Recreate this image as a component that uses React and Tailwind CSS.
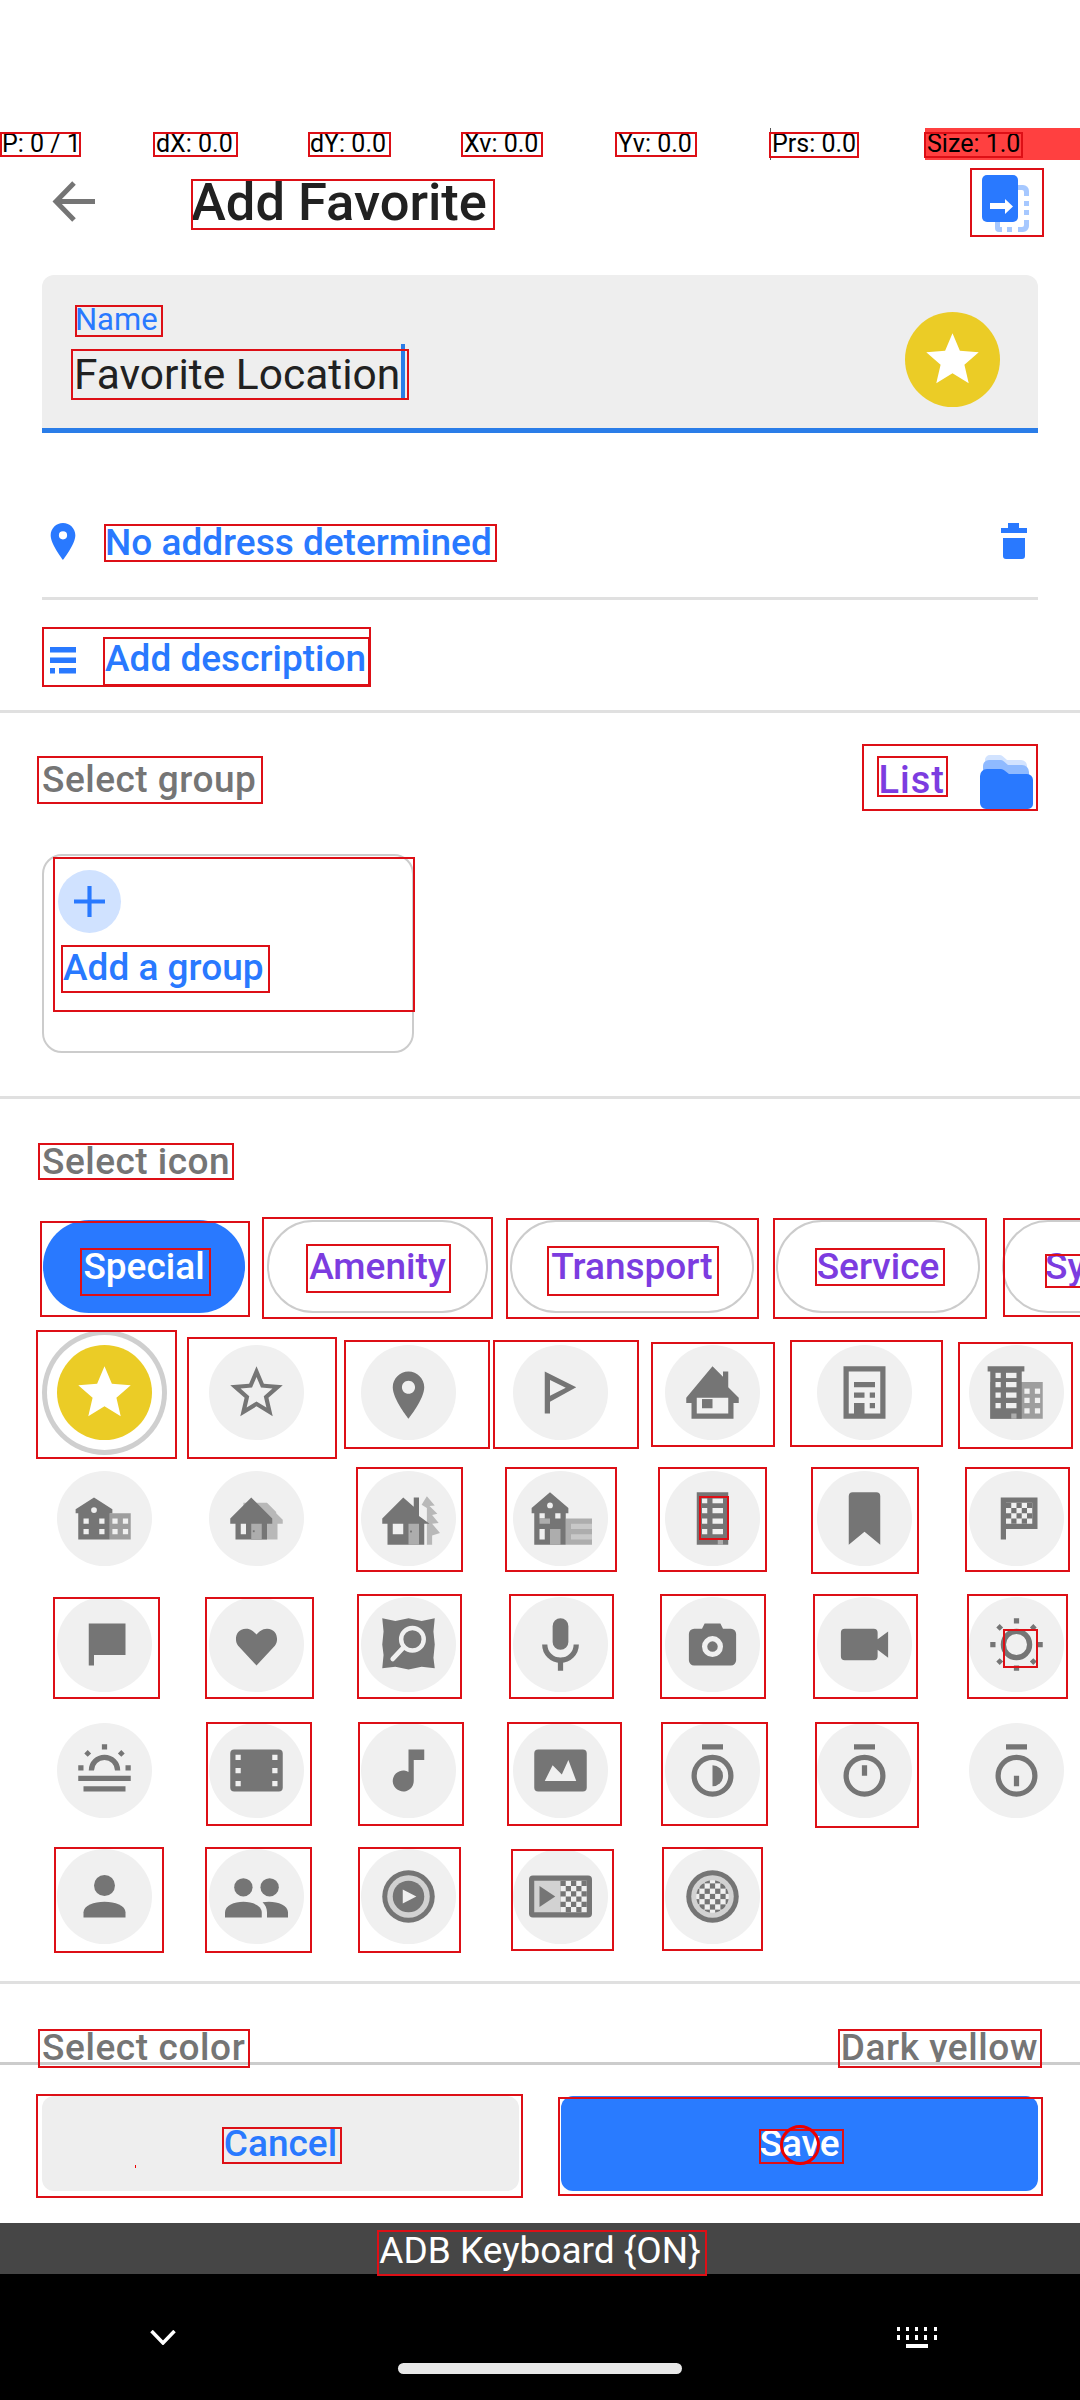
import React from "react";

const DARK = "#757575";
const LIGHT = "#adadad";
const HOLE = "#f0f0f0";

// dark/light squares for the checker icons
function Checker({ x, y, cols, rows, size = 2 }) {
  const cells = [];
  for (let r = 0; r < rows; r++) {
    for (let c = 0; c < cols; c++) {
      if ((r + c) % 2 === 0) {
        cells.push(<rect key={`${r}-${c}`} x={x + c * size} y={y + r * size} width={size} height={size} fill={DARK} />);
      }
    }
  }
  return <>{cells}</>;
}

const Holes = ({ items, fill = HOLE }) => (
  <>
    {items.map(([x, y, w, h], i) => (
      <rect key={i} x={x} y={y} width={w} height={h} fill={fill} />
    ))}
  </>
);

const SunDots = () => (
  <path fill={DARK} d="M11 2h2v2h-2zM5.600 4.200l1.300 1.300-1.300 1.300-1.300-1.300zM18.400 4.200l1.300 1.300-1.300 1.300-1.300-1.300z" />
);

const icons = [
  <path key="s" fill="#fff" d="M12 17.270L18.180 21l-1.640-7.030L22 9.240l-7.190-.61L12 2 9.190 8.630 2 9.240l5.460 4.730L5.820 21z" />,
  <path key="so" fill={DARK} d="M22 9.240l-7.190-.62L12 2 9.190 8.630 2 9.240l5.460 4.730L5.820 21 12 17.270 18.180 21l-1.630-7.030L22 9.240zM12 15.400l-3.760 2.270 1-4.280-3.320-2.880 4.380-.38L12 6.100l1.710 4.040 4.380.38-3.320 2.880 1 4.280L12 15.400z" />,
  <path key="pin" fill={DARK} fillRule="evenodd" d="M12 4C8.700 4 6 6.700 6 10c0 4.500 6 12 6 12s6-7.500 6-12c0-3.300-2.700-6-6-6zm0 8.500c-1.400 0-2.500-1.100-2.500-2.500s1.100-2.500 2.500-2.500 2.500 1.100 2.500 2.500-1.100 2.500-2.500 2.500z" />,
  <path key="pen" fill={DARK} fillRule="evenodd" d="M6 4l12 6-10 5.500V20H6zM8 7.200v6l6-3z" />,
  <g key="house">
    <path fill={DARK} d="M12 2l4 4V4h2v6l4 4v2h-2v6H4v-6H2v-2z" />
    <Holes items={[[6, 14, 12, 6]]} />
    <rect x="8" y="14.500" width="4" height="3.500" fill={DARK} />
  </g>,
  <g key="office">
    <path fill={DARK} fillRule="evenodd" d="M4 2h16v20H4zM6 4v16h2v-4h4v4h6V4z" />
    <path fill={DARK} d="M8 8h8v2H8zM8 12h4v2H8zM14 12h2v2h-2zM14 16h2v2h-2z" />
  </g>,
  <g key="city">
    <rect x="2" y="8" width="20" height="14" fill="#9e9e9e" />
    <path fill={DARK} d="M1 2h14v2h-1v18H2V4H1z" />
    <Holes items={[[4, 4.500, 2, 2], [8, 4.500, 4, 2], [4, 8, 2, 2], [8, 8, 4, 2], [4, 12, 2, 2], [8, 12, 4, 2], [4, 16, 2, 2], [8, 16, 4, 2], [15, 10.500, 2, 2], [19, 10.500, 2, 2], [15, 14, 2, 2], [19, 14, 2, 2], [15, 18, 2, 2], [19, 18, 2, 2]]} />
    <rect x="10" y="20" width="2" height="2" fill={LIGHT} />
  </g>,
  <g key="school">
    <rect x="14" y="10" width="8" height="10" fill="#9e9e9e" />
    <path fill={DARK} d="M8 4l7 4.500V10h-1v10H2V10H1V8.500z" />
    <circle cx="8" cy="8.800" r="1.100" fill={HOLE} />
    <Holes items={[[4, 12, 2, 2], [10, 12, 2, 2], [4, 16, 2, 2], [10, 16, 2, 2], [15, 12, 2, 2], [19, 12, 2, 2], [15, 16, 2, 2], [19, 16, 2, 2]]} />
  </g>,
  <g key="houses">
    <path fill="#b8b8b8" d="M4 8h3V6h6l3 0 3.500 3.500V10l2.500 2.500V14h-2v6H10V8z" />
    <path fill={DARK} d="M10 4l8 8v2h-2v6H4v-6H2v-2z" />
    <Holes items={[[6, 14, 2, 4]]} />
    <rect x="10" y="14" width="4" height="6" fill={LIGHT} />
    <rect x="10.600" y="16.500" width="0.700" height="0.700" fill={DARK} />
  </g>,
  <g key="cabin">
    <path fill="#b8b8b8" d="M19 3.500l3 3.500-2 .2 3 3-2 .5 2.500 3-2.500 .3 3 3.500-3 1V22h-2V8l-2-1.200z" />
    <path fill={DARK} d="M10 4l4 3.500V4h2v7l4 3v-2 2h-2v8H4v-8H2v-2z" />
    <Holes items={[[6, 14, 4, 4]]} />
    <rect x="12" y="14" width="4" height="8" fill={LIGHT} />
    <rect x="12.600" y="16.600" width="0.700" height="0.700" fill={DARK} />
  </g>,
  <g key="parking">
    <rect x="14" y="12" width="10" height="10" fill={LIGHT} />
    <Holes items={[[16, 14, 8, 2], [16, 18, 8, 2]]} fill="#c8c8c8" />
    <path fill={DARK} d="M8 2l7 6v2h-1v12H2V10H1V8z" />
    <circle cx="8" cy="7" r="1.100" fill={HOLE} />
    <Holes items={[[4, 10, 2, 2], [10, 10, 2, 2], [4, 16, 2, 4]]} />
    <rect x="4" y="12" width="4" height="2" fill={LIGHT} />
    <rect x="8" y="16" width="4" height="6" fill={LIGHT} />
  </g>,
  <g key="tower">
    <rect x="6" y="2" width="12" height="20" fill={DARK} />
    <Holes items={[[8, 4.400, 2, 1.800], [12, 4.400, 4, 1.800], [8, 8, 2, 2], [12, 8, 4, 2], [8, 12, 2, 2], [12, 12, 4, 2], [8, 16, 2, 2], [12, 16, 4, 2]]} />
    <rect x="14" y="20" width="2" height="2" fill={LIGHT} />
  </g>,
  <path key="mark" fill={DARK} d="M7.500 2h9A1.500 1.500 0 0 1 18 3.500V22l-6-5-6 5V3.500A1.500 1.500 0 0 1 7.500 2z" />,
  <g key="chk">
    <path fill={DARK} d="M6 4h14v12H8v4H6z" />
    <rect x="8" y="6" width="10" height="8" fill={HOLE} />
    <Checker x={8} y={6} cols={5} rows={4} />
  </g>,
  <path key="flag" fill={DARK} d="M6 4h14v12H8v4H6z" />,
  <path key="heart" fill={DARK} d="M12 20l-7-7.500C3.400 10.500 4 6 8 6c2 0 3 1.200 4 2.200C13 7.200 14 6 16 6c4 0 4.600 4.500 3 6.500z" />,
  <g key="map">
    <path fill={DARK} d="M2 2l5 1 5-1 5 1 5-1-.5 5 .5 5-.5 5 .5 4-5-.5-5 1-5-1-5 .5.500-5L2 12l.5-5z" />
    <circle cx="13.500" cy="10" r="4.300" fill="none" stroke={HOLE} strokeWidth="1.700" />
    <path d="M10.200 13L6 17.500" stroke={HOLE} strokeWidth="1.800" strokeLinecap="round" />
  </g>,
  <g key="mic">
    <path fill={DARK} d="M12 2a3 3 0 0 0-3 3v6a3 3 0 0 0 6 0V5a3 3 0 0 0-3-3zM11 17h2v5h-2z" />
    <path d="M6 12a6 6 0 0 0 12 0" fill="none" stroke={DARK} strokeWidth="2" />
  </g>,
  <path key="cam" fill={DARK} fillRule="evenodd" d="M5 6h3l1-2h6l1 2h3a2 2 0 0 1 2 2v10a2 2 0 0 1-2 2H5a2 2 0 0 1-2-2V8a2 2 0 0 1 2-2zM12 8.800a4 4 0 1 0 0 8 4 4 0 0 0 0-8zM12 10.800a2 2 0 1 1 0 4 2 2 0 0 1 0-4z" />,
  <path key="vid" fill={DARK} d="M4.500 6h11A1.500 1.500 0 0 1 17 7.500V10l4-3v10l-4-3v2.500a1.500 1.500 0 0 1-1.500 1.500h-11A1.500 1.500 0 0 1 3 16.500v-9A1.500 1.500 0 0 1 4.500 6z" />,
  <g key="sun">
    <circle cx="12" cy="12" r="5" fill="none" stroke={DARK} strokeWidth="2" />
    <SunDots />
    <path fill={DARK} d="M11 20h2v2h-2zM2 11h2v2H2zM20 11h2v2h-2zM5.600 17.200l1.300 1.300-1.300 1.300-1.300-1.300zM18.400 17.200l1.300 1.300-1.300 1.300-1.300-1.300z" />
  </g>,
  <g key="rise">
    <SunDots />
    <path d="M7 12a5 5 0 0 1 10 0" fill="none" stroke={DARK} strokeWidth="2" />
    <path fill={DARK} d="M2 10h2v2H2zM20 10h2v2h-2zM2 14h20v2H2zM4 18h16v2H4z" />
  </g>,
  <path key="film" fill={DARK} fillRule="evenodd" d="M3.500 4h17A1.500 1.500 0 0 1 22 5.500v13a1.500 1.500 0 0 1-1.500 1.500h-17A1.500 1.500 0 0 1 2 18.500v-13A1.500 1.500 0 0 1 3.500 4zM4 6v2h2V6zM18 6v2h2V6zM4 11v2h2v-2zM18 11v2h2v-2zM4 16v2h2v-2zM18 16v2h2v-2z" />,
  <path key="note" fill={DARK} d="M12 4h6v4h-4v8a4 4 0 1 1-2-3.460z" />,
  <path key="img" fill={DARK} fillRule="evenodd" d="M3.500 4h17A1.500 1.500 0 0 1 22 5.500v13a1.500 1.500 0 0 1-1.500 1.500h-17A1.500 1.500 0 0 1 2 18.500v-13A1.500 1.500 0 0 1 3.500 4zM6 16h12l-3-8-2.500 5.500L9 10z" />,
  <g key="t1">
    <rect x="8" y="2" width="8" height="2" fill={DARK} />
    <circle cx="12" cy="14" r="7" fill="none" stroke={DARK} strokeWidth="2" />
    <path fill={DARK} d="M12 10a4 4 0 0 1 0 8z" />
  </g>,
  <g key="t2">
    <rect x="8" y="2" width="8" height="2" fill={DARK} />
    <circle cx="12" cy="14" r="7" fill="none" stroke={DARK} strokeWidth="2" />
    <rect x="11" y="10" width="2" height="4" fill={DARK} />
  </g>,
  <g key="t3">
    <rect x="8" y="2" width="8" height="2" fill={DARK} />
    <circle cx="12" cy="14" r="7" fill="none" stroke={DARK} strokeWidth="2" />
    <rect x="11" y="14" width="2" height="4" fill={DARK} />
  </g>,
  <g key="person" fill={DARK}>
    <circle cx="12" cy="7.800" r="4" />
    <path d="M4 20v-2c0-2.500 4-4 8-4s8 1.500 8 4v2z" />
  </g>,
  <g key="people" fill={DARK}>
    <circle cx="7" cy="8.500" r="3.500" />
    <circle cx="17" cy="8.500" r="3.500" />
    <path d="M0 20v-2c0-2.500 3.500-4 7-4s7 1.500 7 4v2z" />
    <path d="M14.300 14.200C18.500 13.400 24 14.800 24 18v2h-8v-2c0-1.500-.6-2.700-1.700-3.800z" />
  </g>,
  <g key="play">
    <circle cx="12" cy="12" r="10" fill={DARK} />
    <circle cx="12" cy="12" r="8.100" fill="#d2d2d2" />
    <circle cx="12" cy="12" r="6" fill={DARK} />
    <path fill="#f0f0f0" d="M9.800 9.300l5.200 2.700-5.200 2.700z" />
  </g>,
  <g key="vchk">
    <rect x="0" y="4" width="24" height="16" rx="1.500" fill={DARK} />
    <rect x="2" y="6" width="10" height="12" fill="#d2d2d2" />
    <rect x="12" y="6" width="10" height="12" fill="#f0f0f0" />
    <path fill={DARK} d="M4 8l6 4-6 4z" />
    <Checker x={12} y={6} cols={5} rows={6} />
  </g>,
  <g key="cchk">
    <circle cx="12" cy="12" r="10" fill={DARK} />
    <circle cx="12" cy="12" r="8.100" fill="#d2d2d2" />
    <clipPath id="disc">
      <circle cx="12" cy="12" r="6.200" />
    </clipPath>
    <g clipPath="url(#disc)">
      <rect x="5" y="5" width="14" height="14" fill="#f0f0f0" />
      <Checker x={5} y={5} cols={7} rows={7} />
    </g>
  </g>,
];

const chips = [
  { label: "Amenity", cls: "w-[221px]" },
  { label: "Transport", cls: "w-[244px]" },
  { label: "Service", cls: "w-[204px]" },
];

// red debug frames from the layout inspector overlay
const frames = [
  "left-[0px] top-[132px] w-[81px] h-[25px]",
  "left-[153px] top-[132px] w-[85px] h-[25px]",
  "left-[308px] top-[132px] w-[83px] h-[25px]",
  "left-[461px] top-[132px] w-[82px] h-[25px]",
  "left-[615px] top-[132px] w-[82px] h-[25px]",
  "left-[769px] top-[132px] w-[90px] h-[26px]",
  "left-[924px] top-[132px] w-[99px] h-[26px]",
  "left-[191px] top-[179px] w-[304px] h-[51px]",
  "left-[970px] top-[168px] w-[74px] h-[69px]",
  "left-[75px] top-[305px] w-[88px] h-[32px]",
  "left-[71px] top-[349px] w-[338px] h-[51px]",
  "left-[104px] top-[524px] w-[393px] h-[38px]",
  "left-[42px] top-[627px] w-[329px] h-[60px]",
  "left-[103px] top-[637px] w-[267px] h-[49px]",
  "left-[37px] top-[756px] w-[226px] h-[48px]",
  "left-[862px] top-[744px] w-[176px] h-[67px]",
  "left-[877px] top-[756px] w-[71px] h-[41px]",
  "left-[53px] top-[857px] w-[362px] h-[155px]",
  "left-[61px] top-[945px] w-[209px] h-[48px]",
  "left-[38px] top-[1143px] w-[196px] h-[37px]",
  "left-[40px] top-[1221px] w-[210px] h-[96px]",
  "left-[80px] top-[1248px] w-[131px] h-[48px]",
  "left-[262px] top-[1217px] w-[231px] h-[102px]",
  "left-[306px] top-[1244px] w-[145px] h-[49px]",
  "left-[506px] top-[1218px] w-[253px] h-[101px]",
  "left-[547px] top-[1246px] w-[172px] h-[50px]",
  "left-[773px] top-[1218px] w-[214px] h-[101px]",
  "left-[815px] top-[1248px] w-[130px] h-[38px]",
  "left-[1003px] top-[1218px] w-[90px] h-[99px]",
  "left-[1045px] top-[1254px] w-[40px] h-[34px]",
  "left-[36px] top-[1330px] w-[141px] h-[129px]",
  "left-[187px] top-[1337px] w-[150px] h-[122px]",
  "left-[344px] top-[1340px] w-[146px] h-[109px]",
  "left-[493px] top-[1340px] w-[146px] h-[109px]",
  "left-[651px] top-[1342px] w-[124px] h-[105px]",
  "left-[790px] top-[1340px] w-[153px] h-[107px]",
  "left-[958px] top-[1342px] w-[115px] h-[107px]",
  "left-[356px] top-[1467px] w-[107px] h-[105px]",
  "left-[505px] top-[1467px] w-[112px] h-[105px]",
  "left-[658px] top-[1467px] w-[109px] h-[105px]",
  "left-[699px] top-[1496px] w-[30px] h-[44px]",
  "left-[811px] top-[1467px] w-[108px] h-[107px]",
  "left-[965px] top-[1467px] w-[105px] h-[105px]",
  "left-[53px] top-[1597px] w-[107px] h-[102px]",
  "left-[205px] top-[1597px] w-[109px] h-[102px]",
  "left-[357px] top-[1594px] w-[105px] h-[105px]",
  "left-[509px] top-[1594px] w-[105px] h-[105px]",
  "left-[660px] top-[1594px] w-[106px] h-[105px]",
  "left-[813px] top-[1594px] w-[105px] h-[105px]",
  "left-[967px] top-[1594px] w-[101px] h-[105px]",
  "left-[1003px] top-[1629px] w-[35px] h-[39px]",
  "left-[206px] top-[1722px] w-[106px] h-[104px]",
  "left-[358px] top-[1722px] w-[106px] h-[104px]",
  "left-[507px] top-[1722px] w-[115px] h-[104px]",
  "left-[661px] top-[1722px] w-[107px] h-[104px]",
  "left-[815px] top-[1722px] w-[104px] h-[106px]",
  "left-[54px] top-[1847px] w-[110px] h-[106px]",
  "left-[205px] top-[1847px] w-[107px] h-[106px]",
  "left-[358px] top-[1847px] w-[103px] h-[106px]",
  "left-[511px] top-[1849px] w-[103px] h-[102px]",
  "left-[662px] top-[1847px] w-[101px] h-[104px]",
  "left-[38px] top-[2029px] w-[212px] h-[39px]",
  "left-[838px] top-[2029px] w-[204px] h-[39px]",
  "left-[36px] top-[2094px] w-[487px] h-[104px]",
  "left-[222px] top-[2127px] w-[120px] h-[37px]",
  "left-[558px] top-[2097px] w-[485px] h-[99px]",
  "left-[759px] top-[2129px] w-[85px] h-[35px]",
  "left-[377px] top-[2230px] w-[330px] h-[46px]",
];

function IconCircle({ children, selected }) {
  return (
    <div
      className={
        selected
          ? "w-[95px] h-[95px] rounded-full bg-[#ebcc26] flex items-center justify-center shadow-[0_0_0_10px_#fff,0_0_0_15px_#cfcfcf]"
          : "w-[95px] h-[95px] rounded-full bg-[#f0f0f0] flex items-center justify-center"
      }
    >
      <svg viewBox="0 0 24 24" className="w-[63px] h-[63px]">
        {children}
      </svg>
    </div>
  );
}

export default function App() {
  return (
    <div className="relative w-[1080px] h-[2400px] overflow-hidden bg-white flex flex-col font-[Roboto,sans-serif]">
      <div className="h-[128px] shrink-0"></div>

      {/* pointer location bar */}
      <div className="h-[32px] shrink-0 flex text-[25px] leading-[32px] text-black">
        <div className="w-[154px] pl-[2px]">P: 0 / 1</div>
        <div className="w-[154px] pl-[2px]">dX: 0.0</div>
        <div className="w-[154px] pl-[2px]">dY: 0.0</div>
        <div className="w-[154px] pl-[2px]">Xv: 0.0</div>
        <div className="w-[154px] pl-[2px]">Yv: 0.0</div>
        <div className="w-[155px] pl-[1px] border-l border-[#555]">Prs: 0.0</div>
        <div className="flex-1 pl-[2px] bg-[#ff4040]">Size: 1.0</div>
      </div>

      {/* app bar */}
      <div className="h-[88px] shrink-0 flex items-center pl-[52px] pr-[50px]">
        <svg viewBox="0 0 43 41" className="w-[43px] h-[41px] mt-[-6px]" fill="none" stroke="#757575" strokeWidth="5">
          <path d="M43 20.500H6M22 2L4 20.500 22 39" />
        </svg>
        <div className="ml-[96px] text-[52.5px] leading-[51px] font-medium text-[#212121] mt-[-4px]">Add Favorite</div>
        <svg viewBox="0 0 48 58" className="ml-auto w-[48px] h-[58px] mt-[-1px]">
          <g fill="#a6c8ff">
            <path d="M36 10h5a6 6 0 0 1 6 6v5h-5v-4a2 2 0 0 0-2-2h-4z" />
            <rect x="42" y="26" width="5" height="5" />
            <rect x="42" y="35" width="5" height="5" />
            <path d="M42 45h5v6a6 6 0 0 1-6 6h-5v-5h4a2 2 0 0 0 2-2z" />
            <rect x="25" y="52" width="5" height="5" />
            <path d="M13 47h5v5h2v5h-3a4 4 0 0 1-4-4z" />
          </g>
          <rect width="36" height="47" rx="5" fill="#2979ff" />
          <path fill="#fff" d="M8 28h15v-4l8 7.500-8 7.500v-5H8z" />
        </svg>
      </div>

      {/* name field */}
      <div className="mt-[27px] mx-[42px] h-[158px] shrink-0 bg-[#eeeeee] rounded-t-[12px] border-b-[5px] border-[#2a7de8] flex">
        <div className="flex-1 pl-[32px] pt-[29px]">
          <div className="ml-[1px] text-[31px] leading-[32px] text-[#2979ff]">Name</div>
          <div className="mt-[13px] flex h-[51px] text-[42.5px] leading-[51px] text-[#212121]">
            Favorite Location
            <span className="ml-[1px] -mt-[5px] w-[4px] h-[56px] bg-[#2a7de8]"></span>
          </div>
        </div>
        <div className="mt-[37px] mr-[38px] w-[95px] h-[95px] rounded-full bg-[#ebcc26] flex items-center justify-center">
          <svg viewBox="0 0 24 24" className="w-[63px] h-[63px]">
            {icons[0]}
          </svg>
        </div>
      </div>

      {/* address */}
      <div className="mt-[91px] mx-[42px] shrink-0 flex items-center h-[76px] pb-[39px] border-b-[3px] border-[#e0e0e0]">
        <svg viewBox="0 0 12 18" className="ml-[8px] w-[26px] h-[37px]">
          <path fill="#2979ff" fillRule="evenodd" d="M6 0C2.700 0 0 2.700 0 6c0 4.500 6 12 6 12s6-7.500 6-12c0-3.300-2.700-6-6-6zm0 8a2 2 0 1 1 0-4 2 2 0 0 1 0 4z" />
        </svg>
        <div className="ml-[29px] mt-[3px] text-[37px] leading-[38px] font-medium text-[#2979ff]">No address determined</div>
        <svg viewBox="0 0 28 38" className="ml-auto mr-[10px] w-[28px] h-[38px]" fill="#2979ff">
          <path d="M8 1h11v5h8v5H1V6h7zM3 16h22v18a3 3 0 0 1-3 3H6a3 3 0 0 1-3-3z" />
        </svg>
      </div>

      {/* description */}
      <div className="mt-[37px] ml-[50px] shrink-0 flex items-center h-[48px]">
        <svg viewBox="0 0 26 27" className="w-[26px] h-[27px] -mt-[2px]" fill="#2979ff">
          <path d="M0 0h26v5.500H0zM0 10.500h26V16H0zM0 21h5v5.500H0zM9 21h17v5.500H9z" />
        </svg>
        <div className="ml-[29px] -mt-[4px] text-[37px] leading-[48px] font-medium text-[#2979ff]">Add description</div>
      </div>
      <div className="mt-[25px] h-[3px] shrink-0 bg-[#e0e0e0]"></div>

      {/* group */}
      <div className="mt-[36px] px-[42px] shrink-0 flex items-start h-[60px]">
        <div className="mt-[10px] text-[37px] leading-[42px] tracking-[0.5px] font-medium text-[#757575]">Select group</div>
        <div className="ml-auto mt-[10px] text-[38px] leading-[42px] tracking-[1px] font-medium text-[#7c3ce0]">List</div>
        <svg viewBox="0 0 53 56" className="mt-[5px] ml-[35px] mr-[5px] w-[53px] h-[56px]">
          <path fill="#d2e3ff" d="M5 24V6a5 5 0 0 1 5-5h10a4 4 0 0 1 3 1.500l4 3.500h14a6 6 0 0 1 6 6v12z" />
          <path fill="#8fbaff" d="M3 28V12a6 6 0 0 1 6-6h12a4 4 0 0 1 3 1.500l4 3.500h14a7 7 0 0 1 7 7v10z" />
          <path fill="#2979ff" d="M0 22a7 7 0 0 1 7-7h14a5 5 0 0 1 3.500 1.500L29 20h18a6 6 0 0 1 6 6v24a5 5 0 0 1-5 5H6a6 6 0 0 1-6-6z" />
        </svg>
      </div>

      <div className="mt-[45px] ml-[42px] w-[372px] h-[199px] shrink-0 border-2 border-[#cccccc] rounded-[20px] pl-[14px] pt-[14px]">
        <div className="w-[63px] h-[63px] rounded-full bg-[#d0e2ff] flex items-center justify-center">
          <svg viewBox="0 0 30 30" className="w-[31px] h-[31px]" fill="#2979ff">
            <path d="M13 0h4v13h13v4H17v13h-4V17H0v-4h13z" />
          </svg>
        </div>
        <div className="mt-[13px] ml-[5px] text-[37px] leading-[44px] font-medium text-[#2979ff]">Add a group</div>
      </div>

      <div className="mt-[43px] h-[3px] shrink-0 bg-[#e0e0e0]"></div>

      {/* icon picker */}
      <div className="mt-[44px] ml-[42px] shrink-0 text-[37px] leading-[37px] tracking-[0.5px] font-medium text-[#757575]">Select icon</div>

      <div className="mt-[40px] ml-[43px] h-[93px] shrink-0 flex gap-[22px] overflow-hidden text-[37px] font-medium text-[#7c3ce0]">
        <div className="w-[202px] shrink-0 rounded-[46px] bg-[#2979ff] text-white flex items-center justify-center">Special</div>
        {chips.map((chip) => (
          <div key={chip.label} className={`${chip.cls} shrink-0 rounded-[46px] border-2 border-[#cccccc] flex items-center justify-center`}>
            {chip.label}
          </div>
        ))}
        <div className="w-[190px] shrink-0 rounded-[46px] border-2 border-[#cccccc] flex items-center pl-[41px]">System</div>
      </div>

      <div className="mt-[32px] ml-[57px] shrink-0 grid grid-cols-[repeat(7,95px)] gap-x-[57px] gap-y-[31px]">
        {icons.map((icon, i) => (
          <IconCircle key={i} selected={i === 0}>
            {icon}
          </IconCircle>
        ))}
      </div>

      <div className="mt-[37px] h-[3px] shrink-0 bg-[#e0e0e0]"></div>

      {/* color row gets clipped by the footer */}
      <div className="mt-[45px] h-[33px] shrink-0 overflow-hidden px-[42px] flex justify-between text-[37px] leading-[38px] tracking-[0.6px] font-medium text-[#757575]">
        <div>Select color</div>
        <div>Dark yellow</div>
      </div>

      <div className="h-[161px] shrink-0 border-t-[3px] border-[#cccccc] px-[42px] pt-[31px] flex gap-[42px] text-[37px] font-medium">
        <div className="flex-1 h-[95px] rounded-[12px] bg-[#eeeeee] text-[#2979ff] flex items-center justify-center">Cancel</div>
        <div className="flex-1 h-[95px] rounded-[12px] bg-[#297bff] text-white flex items-center justify-center">Save</div>
      </div>

      <div className="h-[51px] shrink-0 bg-[#464646] text-white text-[37px] leading-[56px] text-center">ADB Keyboard {"{ON}"}</div>

      {/* nav bar */}
      <div className="flex-1 bg-black pt-[53px]">
        <div className="flex justify-between pl-[150px] pr-[142px] h-[22px]">
          <svg viewBox="0 0 26 15" className="mt-[3px] w-[26px] h-[15px]" fill="none" stroke="#fff" strokeWidth="3.500">
            <path d="M1.500 1l11.500 12L24.500 1" />
          </svg>
          <svg viewBox="0 0 41 22" className="w-[41px] h-[22px]" fill="#fff">
            <path d="M0 0h3v4H0zM9 0h3v4H9zM18 0h3v4h-3zM27 0h3v4h-3zM37 0h3v4h-3zM0 8h3v5H0zM9 8h3v5H9zM18 8h3v5h-3zM27 8h3v5h-3zM37 8h3v5h-3zM9 17h22v4H9z" />
          </svg>
        </div>
        <div className="mt-[14px] mx-auto w-[284px] h-[11px] rounded-full bg-[#e8e8e8]"></div>
      </div>

      {/* overlay frames */}
      {frames.map((f) => (
        <div key={f} className={`absolute border-2 border-[#dd0f16] ${f}`}></div>
      ))}
      <div className="absolute left-[780px] top-[2125px] w-[40px] h-[40px] rounded-full border-[3px] border-[#ee0000]"></div>
      <div className="absolute left-[135px] top-[2165px] w-px h-[3px] bg-[#ee0000]"></div>
    </div>
  );
}
